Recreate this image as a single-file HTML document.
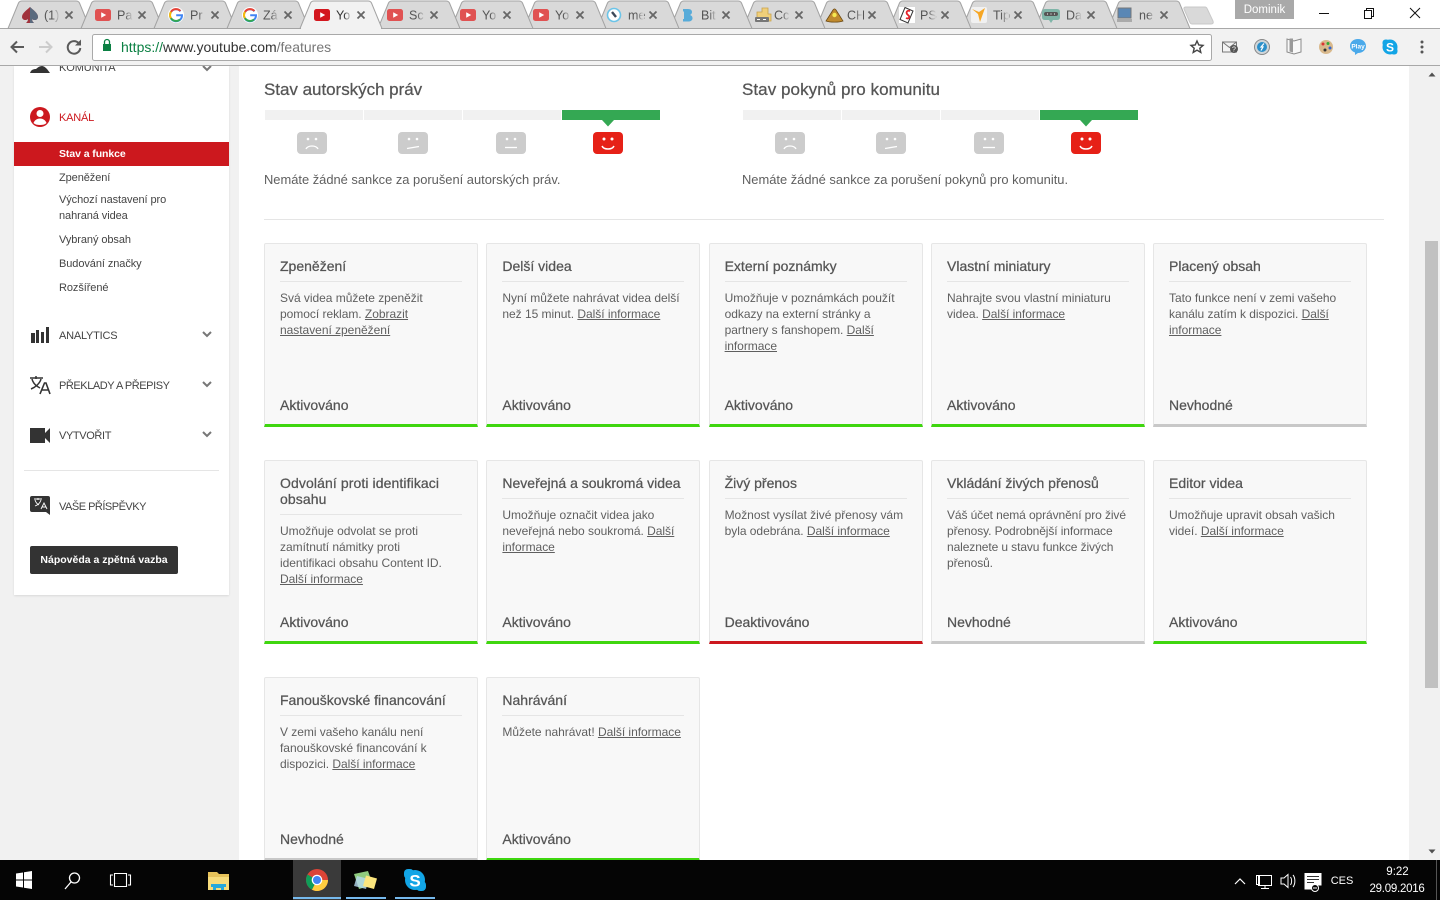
<!DOCTYPE html>
<html lang="cs"><head><meta charset="utf-8"><title>Stav a funkce</title>
<style>
*{box-sizing:border-box}
html,body{margin:0;padding:0;width:1440px;height:900px;overflow:hidden;background:#f1f1f1;font-family:"Liberation Sans",Arial,sans-serif;color:#555}
.a{position:absolute}
a{color:inherit;text-decoration:underline}
#side{left:14px;top:66px;width:215px;height:529px;background:#fff;box-shadow:0 1px 2px rgba(0,0,0,.1)}
#main{left:239px;top:66px;width:1170px;height:794px;background:#fff}
.n{position:absolute;left:59px;font-size:11px;line-height:16px;color:#444;white-space:nowrap;letter-spacing:-.08px}
.h{position:absolute;font-size:17px;line-height:20px;color:#555;-webkit-text-stroke:.25px #555;white-space:nowrap}
.s{position:absolute;font-size:12.900px;line-height:16px;color:#5f5f5f;white-space:nowrap}
.bar{position:absolute;top:110px;height:10px;width:98px;background:#f1f1f1}
.c{position:absolute;width:214px;height:184px;background:#f8f8f8;border:1px solid #e6e6e6;border-bottom:3px solid #3fd60f;border-radius:2px 2px 0 0}
.c.g{border-bottom-color:#c8c8c8}.c.r{border-bottom-color:#cc181e}
.c h3{margin:14px 15px 0;padding:0 0 7px;font-size:14px;line-height:16px;font-weight:400;color:#555;-webkit-text-stroke:.25px #555;border-bottom:1px solid #e5e5e5;white-space:nowrap}
.c p{margin:8px 15px 0;font-size:12px;line-height:16px;color:#5f5f5f;white-space:nowrap;letter-spacing:-.03px}
.c b{position:absolute;left:15px;top:153px;font-size:14px;line-height:16px;font-weight:400;color:#555;-webkit-text-stroke:.25px #555}
svg{display:block;overflow:visible}
svg text{font-family:"Liberation Sans",Arial,sans-serif}
</style></head><body>

<div class="a" id="main"></div>
<div class="a" id="side"></div>

<!-- sidebar -->
<svg class="a" style="left:0;top:0" width="240" height="600">
<path d="M30 73c1-3 3-4 6-4 2-2 4-3 6-3s4 2 5 3l3 4z" fill="#333"/>
<path d="M203 66l4 4 4-4" fill="none" stroke="#777" stroke-width="2"/>
<circle cx="40" cy="117" r="10" fill="#cc181e"/><circle cx="40" cy="113.500" r="3.500" fill="#fff"/><path d="M33.500 123c1-3 4-4.500 6.500-4.500s5.500 1.500 6.500 4.500c-1.500 1.500-4 2-6.500 2s-5-.5-6.500-2z" fill="#fff"/>
<path d="M31 333h4v10h-4zM36 330h3v13h-3zM41 332h3v11h-3zM46 327h3v16h-3z" fill="#333"/>
<path d="M203 332l4 4 4-4M203 382l4 4 4-4M203 432l4 4 4-4" fill="none" stroke="#777" stroke-width="2"/>
<path d="M30 378h13M36 376v3M32 379c1 4 4 7 8 9M41 379c-1 4-5 8-10 10" fill="none" stroke="#333" stroke-width="1.500"/>
<path d="M40 394l4.500-11h1.500l4 11M41.500 390h7" fill="none" stroke="#333" stroke-width="1.600"/>
<path d="M30 428h15v5l5-5v15l-5-5v5h-15z" fill="#333"/>
<path d="M32 496h16a2 2 0 0 1 2 2v17l-4-3h-14a2 2 0 0 1-2-2v-12a2 2 0 0 1 2-2z" fill="#333"/>
<path d="M34 499h8M38 498v2M35 500c1 3 2 4 4 5M41 500c-1 3-3 5-6 6M41 509l3-6 3 6M42 507h4" fill="none" stroke="#fff" stroke-width=".9"/>
</svg>
<div class="n" style="top:60px;letter-spacing:-.1px">KOMUNITA</div>
<div class="n" style="top:110px;color:#cc181e;letter-spacing:-.2px">KANÁL</div>
<div class="a" style="left:14px;top:142px;width:215px;height:24px;background:#cc181e"></div>
<div class="n" style="top:146px;color:#fff;font-weight:700;font-size:10.500px">Stav a funkce</div>
<div class="n" style="top:170px">Zpeněžení</div>
<div class="n" style="top:192px">Výchozí nastavení pro<br>nahraná videa</div>
<div class="n" style="top:232px">Vybraný obsah</div>
<div class="n" style="top:256px">Budování značky</div>
<div class="n" style="top:280px">Rozšířené</div>
<div class="n" style="top:328px;letter-spacing:-.22px">ANALYTICS</div>
<div class="n" style="top:378px;letter-spacing:-.44px">PŘEKLADY A PŘEPISY</div>
<div class="n" style="top:428px;letter-spacing:-.37px">VYTVOŘIT</div>
<div class="a" style="left:24px;top:470px;width:195px;height:1px;background:#e5e5e5"></div>
<div class="n" style="top:499px;letter-spacing:-.5px">VAŠE PŘÍSPĚVKY</div>
<div class="a" style="left:30px;top:546px;width:148px;height:28px;background:#333;border-radius:2px;color:#fff;font-weight:700;font-size:10.500px;line-height:29px;text-align:center;white-space:nowrap">Nápověda a zpětná vazba</div>

<!-- status -->
<div class="h" style="left:264px;top:80px;letter-spacing:-.03px">Stav autorských práv</div>
<div class="h" style="left:742px;top:80px;letter-spacing:.06px">Stav pokynů pro komunitu</div>
<div class="bar" style="left:265px"></div><div class="bar" style="left:364px"></div><div class="bar" style="left:463px"></div><div class="bar" style="left:562px;background:#34a853"></div>
<div class="bar" style="left:743px"></div><div class="bar" style="left:842px"></div><div class="bar" style="left:941px"></div><div class="bar" style="left:1040px;background:#34a853"></div>
<svg class="a" style="left:0;top:0;pointer-events:none" width="1440" height="170">
<defs>
<g id="f1"><rect width="30" height="22" rx="4" fill="#ccc"/><circle cx="11" cy="7" r="1.300" fill="#fff"/><circle cx="19" cy="7" r="1.300" fill="#fff"/><path d="M9 17c2-4 10-4 12 0" fill="none" stroke="#fff" stroke-width="1.300"/></g>
<g id="f2"><rect width="30" height="22" rx="4" fill="#ccc"/><circle cx="11" cy="7" r="1.300" fill="#fff"/><circle cx="19" cy="7" r="1.300" fill="#fff"/><path d="M9 16.500l12-2" fill="none" stroke="#fff" stroke-width="1.300"/></g>
<g id="f3"><rect width="30" height="22" rx="4" fill="#ccc"/><circle cx="11" cy="7" r="1.300" fill="#fff"/><circle cx="19" cy="7" r="1.300" fill="#fff"/><path d="M9 15.500h12" fill="none" stroke="#fff" stroke-width="1.300"/></g>
<g id="f4"><rect width="30" height="22" rx="4" fill="#e62117"/><circle cx="11" cy="7" r="1.500" fill="#fff"/><circle cx="19" cy="7" r="1.500" fill="#fff"/><path d="M9 14c2 4 10 4 12 0" fill="none" stroke="#fff" stroke-width="1.500"/></g>
</defs>
<path d="M602 120h12l-6 6.500zM1080 120h12l-6 6.500z" fill="#34a853"/>
<use href="#f1" x="297" y="132"/><use href="#f2" x="398" y="132"/><use href="#f3" x="496" y="132"/><use href="#f4" x="593" y="132"/>
<use href="#f1" x="775" y="132"/><use href="#f2" x="876" y="132"/><use href="#f3" x="974" y="132"/><use href="#f4" x="1071" y="132"/>
</svg>
<div class="s" style="left:264px;top:172px">Nemáte žádné sankce za porušení autorských práv.</div>
<div class="s" style="left:742px;top:172px">Nemáte žádné sankce za porušení pokynů pro komunitu.</div>
<div class="a" style="left:264px;top:219px;width:1120px;height:1px;background:#e5e5e5"></div>

<!-- cards -->
<div class="c" style="left:264px;top:243px"><h3>Zpeněžení</h3><p>Svá videa můžete zpeněžit<br>pomocí reklam. <a>Zobrazit</a><br><a>nastavení zpeněžení</a></p><b>Aktivováno</b></div>
<div class="c" style="left:486.400px;top:243px"><h3>Delší videa</h3><p>Nyní můžete nahrávat videa delší<br>než 15 minut. <a>Další informace</a></p><b>Aktivováno</b></div>
<div class="c" style="left:708.600px;top:243px"><h3>Externí poznámky</h3><p>Umožňuje v poznámkách použít<br>odkazy na externí stránky a<br>partnery s fanshopem. <a>Další</a><br><a>informace</a></p><b>Aktivováno</b></div>
<div class="c" style="left:931px;top:243px"><h3>Vlastní miniatury</h3><p>Nahrajte svou vlastní miniaturu<br>videa. <a>Další informace</a></p><b>Aktivováno</b></div>
<div class="c g" style="left:1153px;top:243px"><h3>Placený obsah</h3><p>Tato funkce není v zemi vašeho<br>kanálu zatím k dispozici. <a>Další</a><br><a>informace</a></p><b>Nevhodné</b></div>

<div class="c" style="left:264px;top:460px"><h3 style="letter-spacing:.1px">Odvolání proti identifikaci<br>obsahu</h3><p>Umožňuje odvolat se proti<br>zamítnutí námitky proti<br>identifikaci obsahu Content ID.<br><a>Další informace</a></p><b>Aktivováno</b></div>
<div class="c" style="left:486.400px;top:460px"><h3>Neveřejná a soukromá videa</h3><p>Umožňuje označit videa jako<br>neveřejná nebo soukromá. <a>Další</a><br><a>informace</a></p><b>Aktivováno</b></div>
<div class="c r" style="left:708.600px;top:460px"><h3>Živý přenos</h3><p>Možnost vysílat živé přenosy vám<br>byla odebrána. <a>Další informace</a></p><b>Deaktivováno</b></div>
<div class="c g" style="left:931px;top:460px"><h3>Vkládání živých přenosů</h3><p style="letter-spacing:-.1px">Váš účet nemá oprávnění pro živé<br>přenosy. Podrobnější informace<br>naleznete u stavu funkce živých<br>přenosů.</p><b>Nevhodné</b></div>
<div class="c" style="left:1153px;top:460px"><h3>Editor videa</h3><p>Umožňuje upravit obsah vašich<br>videí. <a>Další informace</a></p><b>Aktivováno</b></div>

<div class="c g" style="left:264px;top:677px"><h3>Fanouškovské financování</h3><p>V zemi vašeho kanálu není<br>fanouškovské financování k<br>dispozici. <a>Další informace</a></p><b>Nevhodné</b></div>
<div class="c" style="left:486.400px;top:677px"><h3>Nahrávání</h3><p>Můžete nahrávat! <a>Další informace</a></p><b>Aktivováno</b></div>

<!-- scrollbar -->
<div class="a" style="left:1424px;top:66px;width:16px;height:794px;background:#f1f1f1"></div>
<div class="a" style="left:1425px;top:241px;width:13px;height:447px;background:#c1c1c1"></div>
<svg class="a" style="left:1424px;top:66px" width="16" height="794"><path d="M4.500 10.500l3.500-4 3.500 4z" fill="#505050"/><path d="M4.500 783.500l3.500 4 3.500-4z" fill="#505050"/></svg>

<!-- chrome -->
<div class="a" style="left:0;top:0;width:1440px;height:29px;background:#fff"></div>
<div class="a" style="left:0;top:28px;width:1440px;height:38px;background:#f2f2f2;border-top:1px solid #a8a8a8;border-bottom:1px solid #a8a8a8"></div>
<svg class="a" style="left:0;top:0" width="1440" height="66">
<defs>
<linearGradient id="fg"><stop offset="0" stop-color="#d9d9d9" stop-opacity="0"/><stop offset="1" stop-color="#d9d9d9"/></linearGradient>
<linearGradient id="fa"><stop offset="0" stop-color="#f2f2f2" stop-opacity="0"/><stop offset="1" stop-color="#f2f2f2"/></linearGradient>
<rect id="fd" width="8" height="16" fill="url(#fg)"/>
<path id="t" d="M0 28.500L10.500 3Q11.500 1 14 1H68Q70.500 1 71.500 3L82 28.500z" fill="#d9d9d9" stroke="#a3a3a3"/>
<g id="yt"><rect width="16" height="12" rx="2.500" fill="#e05252"/><path d="M6.200 3.200l5 2.800-5 2.800z" fill="#fff"/></g>
<path id="x" d="M-3.500-3.500L3.500 3.500M3.500-3.500L-3.500 3.500" stroke="#666" stroke-width="1.800" fill="none"/>
<g id="gg"><circle cx="8" cy="8" r="8" fill="#fff"/><path d="M12.500 4.300A6 6 0 1 0 14 8.200H8.200" fill="none" stroke="#4285f4" stroke-width="2"/><path d="M12.400 4A6 6 0 0 0 3 4.800" fill="none" stroke="#ea4335" stroke-width="2"/><path d="M3 4.800A6 6 0 0 0 3 11.200" fill="none" stroke="#fbbc05" stroke-width="2"/><path d="M3 11.200A6 6 0 0 0 12 12.500" fill="none" stroke="#34a853" stroke-width="2"/></g>
</defs>
<use href="#t" x="1108"/><use href="#t" x="1035"/><use href="#t" x="962"/><use href="#t" x="889"/><use href="#t" x="816"/><use href="#t" x="743"/><use href="#t" x="670"/><use href="#t" x="597"/><use href="#t" x="524"/><use href="#t" x="451"/><use href="#t" x="378"/><use href="#t" x="8"/><use href="#t" x="81"/><use href="#t" x="154"/><use href="#t" x="227"/>
<path d="M300 28.500L310.500 3Q311.500 1 314 1H368Q370.500 1 371.500 3L382 28.500z" fill="#f2f2f2" stroke="#a3a3a3"/><path d="M301 28.500h80" stroke="#f2f2f2" stroke-width="2"/>
<path d="M1184 9q-.5-2 2-2h19q1.500 0 2.300 2l5.700 12q1 3-2 3h-19q-1.500 0-2.300-2z" fill="#d9d9d9" stroke="#c8c8c8"/>

<!-- favicons -->
<path d="M30 7c3 3 8 6 8 10 0 3-4 4-6 2 0 2 1 3 2 4h-8c1-1 2-2 2-4-2 2-6 1-6-2 0-4 5-7 8-10z" fill="#a0323c"/><path d="M30 7c3 3 8 6 8 10 0 3-4 4-6 2 0 2 1 3 2 4h-4z" fill="#5a6a7e"/>
<use href="#yt" x="95" y="9"/><use href="#gg" x="168" y="7"/><use href="#gg" x="242" y="7"/>
<rect x="314" y="9" width="16" height="12" rx="2.500" fill="#d3171e"/><path d="M320.200 12.200l5 2.800-5 2.800z" fill="#fff"/>
<use href="#yt" x="387" y="9"/><use href="#yt" x="460" y="9"/><use href="#yt" x="533" y="9"/>
<circle cx="614" cy="15" r="6.500" fill="#fff" stroke="#6cc4e8" stroke-width="1.600"/><path d="M612 12l4 5" stroke="#3c4a5a" stroke-width="2.400"/>
<path d="M683 9h5c3 0 4 1.500 4 3s-1 2.500-2 3c1.500.5 2.500 1.500 2.500 3.200 0 2.300-2 3.300-4.500 3.300h-5V19h1V11.500h-1z" fill="#3fa2d8" opacity=".85"/>
<path d="M757 12h5V8h6v6h3v7h-14z" fill="#f0cf7a" stroke="#c9a24a" stroke-width=".8"/><rect x="755" y="17" width="14" height="5" rx="1" fill="#777"/><path d="M757 19.500h3M763 19.500h3" stroke="#fff"/>
<path d="M826 21l7-11c1-1.500 2-1.500 3 0l7 11c-4 1.500-13 1.500-17 0z" fill="#c08a2e" stroke="#6b4a15" stroke-width=".8"/><circle cx="834.500" cy="15" r="2.200" fill="#f5e94f"/>
<rect x="899" y="7" width="16" height="16" fill="#fff"/><path d="M905 7.500l8 3.500-5 12-8-3.500z" fill="#fff" stroke="#333"/><path d="M910 11c-3-1-4 1-3 3l2 2c1 2-1 3-3 2" fill="none" stroke="#e5222a" stroke-width="1.800"/>
<rect x="971" y="7" width="16" height="16" rx="2" fill="#f1f1f1"/><path d="M972 9l7 3 6-4-5 14-2-8z" fill="#f6a623"/>
<path d="M1045 9h12q3 0 3 3v5q0 3-3 3h-4l-2 3-2-3h-4q-3 0-3-3v-5q0-3 3-3z" fill="#7fb5a8"/><rect x="1044" y="12" width="14" height="4" rx="2" fill="#555"/><path d="M1047 14h1M1050.500 14h1M1054 14h1" stroke="#fff"/>
<rect x="1118" y="8" width="13" height="10" fill="#5a87b5" stroke="#777"/><rect x="1117" y="19" width="15" height="3" fill="#aaa"/>

<g font-size="12.500" fill="#555">
<text x="44" y="19.500">(1)</text><text x="117" y="19.500">Pa</text><text x="190" y="19.500">Pr</text><text x="263" y="19.500">Zá</text><text x="336" y="19.500" fill="#333">Yo</text><text x="409" y="19.500">Sc</text><text x="482" y="19.500">Yo</text><text x="555" y="19.500">Yo</text><text x="628" y="19.500">me</text><text x="701" y="19.500">Bit</text><text x="774" y="19.500">Cc</text><text x="847" y="19.500">CH</text><text x="920" y="19.500">PS</text><text x="993" y="19.500">Tip</text><text x="1066" y="19.500">Da</text><text x="1139" y="19.500">ne</text>
</g>
<use href="#fd" x="52" y="7"/><use href="#fd" x="125" y="7"/><use href="#fd" x="198" y="7"/><use href="#fd" x="271" y="7"/><rect x="344" y="7" width="8" height="16" fill="url(#fa)"/><use href="#fd" x="417" y="7"/><use href="#fd" x="490" y="7"/><use href="#fd" x="563" y="7"/><use href="#fd" x="636" y="7"/><use href="#fd" x="709" y="7"/><use href="#fd" x="782" y="7"/><use href="#fd" x="855" y="7"/><use href="#fd" x="928" y="7"/><use href="#fd" x="1001" y="7"/><use href="#fd" x="1074" y="7"/><use href="#fd" x="1147" y="7"/>
<use href="#x" x="69" y="15"/><use href="#x" x="142" y="15"/><use href="#x" x="215" y="15"/><use href="#x" x="288" y="15"/><use href="#x" x="361" y="15"/><use href="#x" x="434" y="15"/><use href="#x" x="507" y="15"/><use href="#x" x="580" y="15"/><use href="#x" x="653" y="15"/><use href="#x" x="726" y="15"/><use href="#x" x="799" y="15"/><use href="#x" x="872" y="15"/><use href="#x" x="945" y="15"/><use href="#x" x="1018" y="15"/><use href="#x" x="1091" y="15"/><use href="#x" x="1164" y="15"/>

<!-- profile + window buttons -->
<rect x="1235" y="0" width="59" height="19" fill="#a9a9a9"/>
<text x="1264.500" y="13" font-size="11.500" fill="#fff" text-anchor="middle">Dominik</text>
<path d="M1319 13.500h10" stroke="#111"/>
<path d="M1364.500 10.500h7v8h-7zM1366.500 10.500v-2h7v8h-2" fill="none" stroke="#111"/>
<path d="M1410 8l10 10M1420 8l-10 10" stroke="#111"/>

<!-- nav -->
<path d="M24 47H12M17 41.500L11.500 47l5.500 5.500" fill="none" stroke="#5a5a5a" stroke-width="2"/>
<path d="M39 47h12M46 41.500l5.500 5.500-5.500 5.500" fill="none" stroke="#ccc" stroke-width="2"/>
<path d="M79 43.500A6.300 6.300 0 1 0 80.300 48" fill="none" stroke="#5a5a5a" stroke-width="2"/><path d="M81 39.500v6h-6z" fill="#5a5a5a"/>
<rect x="92.500" y="34.500" width="1119" height="26" rx="2" fill="#fff" stroke="#a9a9a9"/>
<path d="M104.500 44v-2a2.500 2.500 0 0 1 5 0v2" fill="none" stroke="#0b8043" stroke-width="1.300"/><rect x="103" y="44" width="8" height="7" fill="#0b8043"/>
<text x="121" y="52" font-size="14" fill="#0b8043">https://<tspan fill="#333">www.youtube.com</tspan><tspan fill="#777">/features</tspan></text>
<path d="M1197 41l1.800 4 4.200.4-3.200 2.800 1 4.200-3.800-2.200-3.800 2.200 1-4.200-3.200-2.800 4.200-.4z" fill="none" stroke="#444" stroke-width="1.400"/>

<!-- extensions -->
<path d="M1222.500 42h14v10h-14zM1222.500 42l7 5.500 7-5.500" fill="#f4f4f4" stroke="#777"/><circle cx="1234" cy="49" r="4" fill="#555"/><text x="1234" y="51.500" font-size="7" fill="#fff" text-anchor="middle">?</text>
<circle cx="1262" cy="47" r="7.500" fill="#cfd6da" stroke="#888"/><circle cx="1262" cy="47" r="5" fill="#2b8fc9"/><path d="M1264 43.500l-3 3.500h2l-2 3.500" stroke="#fff" fill="none" stroke-width="1.200"/>
<path d="M1294 41l-7-2v13l7 2 7-2V39z" fill="#f8f8f8" stroke="#8a8a8a"/><path d="M1289.500 38.500h3.500v14l-3.500-1z" fill="#9a9a9a"/>
<circle cx="1326" cy="47" r="7" fill="#d9b98c"/><circle cx="1323" cy="44" r="1.500" fill="#d33"/><circle cx="1328" cy="43.500" r="1.500" fill="#3a3"/><circle cx="1330" cy="48" r="1.500" fill="#36c"/><circle cx="1325" cy="50" r="1.500" fill="#333"/>
<path d="M1358 39c4.500 0 8 3 8 7s-3.500 7-8 7l-3 2v-2.500c-3-1-5-3.500-5-6.500 0-4 3.500-7 8-7z" fill="#4aa9ea"/><text x="1358" y="48.500" font-size="6.500" font-weight="700" fill="#fff" text-anchor="middle">Play</text>
<circle cx="1390" cy="47" r="7.500" fill="#12a5e6"/><rect x="1382.500" y="39.500" width="7" height="7" rx="3" fill="#12a5e6"/><rect x="1390.500" y="47.500" width="7" height="7" rx="3" fill="#12a5e6"/><text x="1390" y="51.500" font-size="12" font-weight="700" fill="#fff" text-anchor="middle">S</text>
<circle cx="1422" cy="42" r="1.500" fill="#555"/><circle cx="1422" cy="47" r="1.500" fill="#555"/><circle cx="1422" cy="52" r="1.500" fill="#555"/>
</svg>

<!-- taskbar -->
<div class="a" style="left:0;top:860px;width:1440px;height:40px;background:#050505"></div>
<svg class="a" style="left:0;top:860px" width="1440" height="40">
<rect x="293" y="0" width="48" height="40" fill="#3a3a3a"/>
<path d="M293 38h48M346 38h40M395 38h40" stroke="#76b9ed" stroke-width="2"/>
<path d="M16 13.500l7-1v7h-7zM24 12.300l8-1.300v8.500h-8zM16 20.500h7v7l-7-1zM24 20.500h8V29l-8-1.300z" fill="#fff"/>
<circle cx="74.500" cy="18" r="5" fill="none" stroke="#fff" stroke-width="1.300"/><path d="M71 22l-6 7" stroke="#fff" stroke-width="1.300"/>
<path d="M114.500 13.500h12v13h-12zM113 15h-2.500v10h2.500M128 15h2.500v10H128" fill="none" stroke="#fff" stroke-width="1.100"/>
<path d="M208 12h9l2 2h10v6h-21z" fill="#e6c25a"/><path d="M208 17h21v13h-21z" fill="#f7dc7c"/><path d="M213 30v-5h11v5h-3v-2h-5v2z" fill="#26a8dc"/><path d="M211 24h15v3h-15z" fill="#26a8dc"/>
<circle cx="317" cy="20" r="11" fill="#db4437"/><path d="M317 20L307.500 14.500A11 11 0 0 0 312 29.800z" fill="#0f9d58"/><path d="M317 20l-5 9.800A11 11 0 0 0 328 20z" fill="#ffcd40"/><circle cx="317" cy="20" r="5.300" fill="#fff"/><circle cx="317" cy="20" r="4" fill="#4285f4"/>
<path d="M354 14l14-3 5 14-14 4z" fill="#8fcb7e"/><path d="M357 16l12 3-3 10-12-3z" fill="#b7d9ef" opacity=".8"/><path d="M366 15.500l11 3-3 10.500-11-3z" fill="#fbe57d"/>
<circle cx="415" cy="20" r="10" fill="#12a5e6"/><rect x="404" y="9" width="10" height="10" rx="4" fill="#12a5e6"/><rect x="416" y="21" width="10" height="10" rx="4" fill="#12a5e6"/><text x="415" y="26.500" font-size="17" font-weight="700" fill="#fff" text-anchor="middle">S</text>
<path d="M1235 24l5-5 5 5" fill="none" stroke="#fff" stroke-width="1.200"/>
<path d="M1258.500 15.500h13v10h-13zM1256.500 15.500v9h3v-9zM1265 25.500v3M1261 28.500h8" fill="none" stroke="#fff"/>
<path d="M1281 18h3l4-3.500v13l-4-3.500h-3zM1290.500 17c1.500 2 1.500 6 0 8M1293 15c2.500 3 2.500 9 0 12" fill="none" stroke="#fff"/>
<path d="M1304.500 13h17v12.500h-6v4h-11z" fill="#fff"/><path d="M1307 16.500h12M1307 19.500h12M1307 22.500h7" stroke="#333"/><circle cx="1315" cy="28" r="3.500" fill="#050505" stroke="#fff"/><path d="M1313 28h4" stroke="#fff"/>
<g fill="#fff" font-size="11" text-anchor="middle"><text x="1342" y="24">CES</text><text x="1397.500" y="15" font-size="11.500">9:22</text><text x="1397" y="32" font-size="11.500" letter-spacing="-.25">29.09.2016</text></g>
<path d="M1436.500 0v40" stroke="#555"/>
</svg>
</body></html>
